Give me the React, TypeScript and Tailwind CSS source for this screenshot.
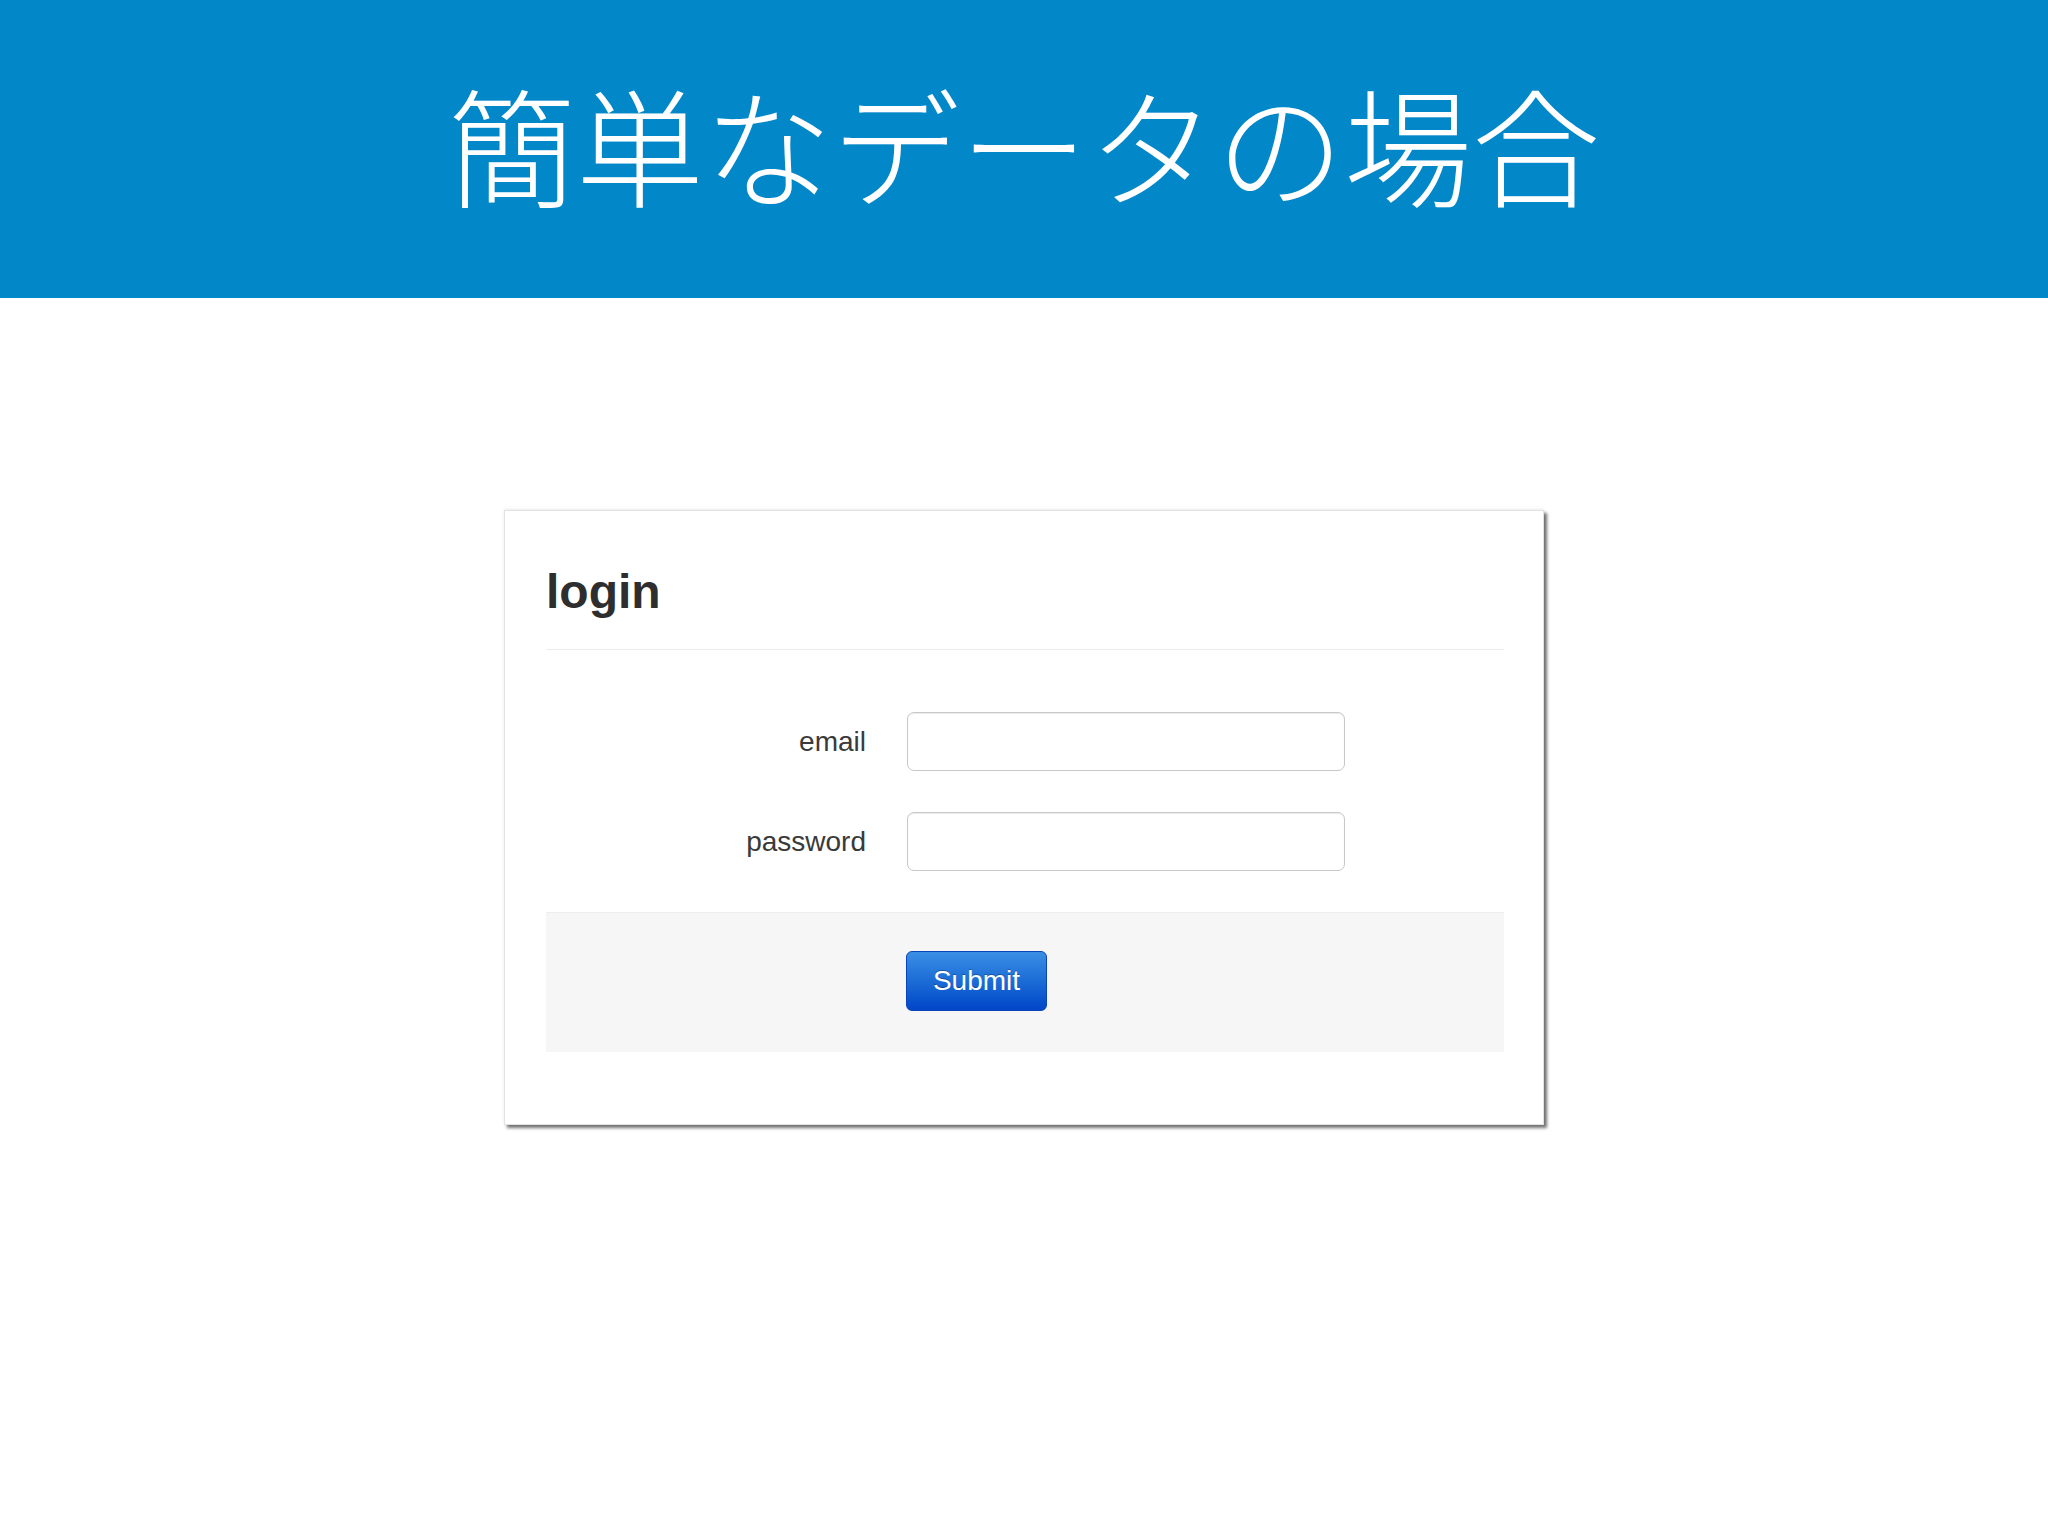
import { useState } from 'react';

const fields = [
  { name: 'email', type: 'email' },
  { name: 'password', type: 'password' },
];

export default function App() {
  const [values, setValues] = useState<Record<string, string>>({ email: '', password: '' });

  return (
    <div className="min-h-screen bg-white font-['Liberation_Sans',Arial,sans-serif]">
      {/* Slide title */}
      <header className="h-[298px] bg-[#0287c9] flex items-center justify-center pb-[12px]">
        <h1 className="text-white text-[128px] leading-none font-light tracking-normal font-['Noto_Sans_CJK_JP','Noto_Sans',sans-serif]">
          簡単なデータの場合
        </h1>
      </header>

      {/* Screenshot of the login form */}
      <div className="flex justify-center pt-[212px]">
        <div className="w-[1040px] h-[615px] bg-white border border-[#e2e2e2] shadow-[0_-1px_3px_rgba(0,0,0,0.08),3px_3px_3px_rgba(0,0,0,0.55)] pl-[41px] pr-[39px] pt-[57px]">
          <h2 className="text-[48px] leading-none font-bold text-[#2e2e2e]">login</h2>
          <div className="mt-[33px] h-px bg-[#ececec]" />

          <form className="mt-[62px]" onSubmit={e => e.preventDefault()}>
            <div className="flex flex-col gap-[41px]">
              {fields.map(f => (
                <div key={f.name} className="flex items-center">
                  <label className="w-[320px] text-right text-[28px] text-[#3a3a3a]">{f.name}</label>
                  <input
                    type={f.type}
                    value={values[f.name]}
                    onChange={e => setValues(prev => ({ ...prev, [f.name]: e.target.value }))}
                    className="ml-[41px] w-[438px] h-[59px] rounded-[7px] border border-[#c8c8c8] bg-white px-3 text-[26px] shadow-[inset_0_1px_1px_rgba(0,0,0,0.08)] outline-none"
                  />
                </div>
              ))}
            </div>

            <div className="mt-[41px] h-[140px] bg-[#f7f6f7] border-t border-[#eeeeee] pl-[360px] pt-[38px]">
              <button
                type="submit"
                className="w-[141px] h-[60px] rounded-[6px] border border-[#0b44b8] bg-gradient-to-b from-[#3a8fe4] to-[#0345c8] text-white text-[28px] [text-shadow:0_-1px_0_rgba(0,0,0,0.3)]"
              >
                Submit
              </button>
            </div>
          </form>
        </div>
      </div>
    </div>
  );
}
